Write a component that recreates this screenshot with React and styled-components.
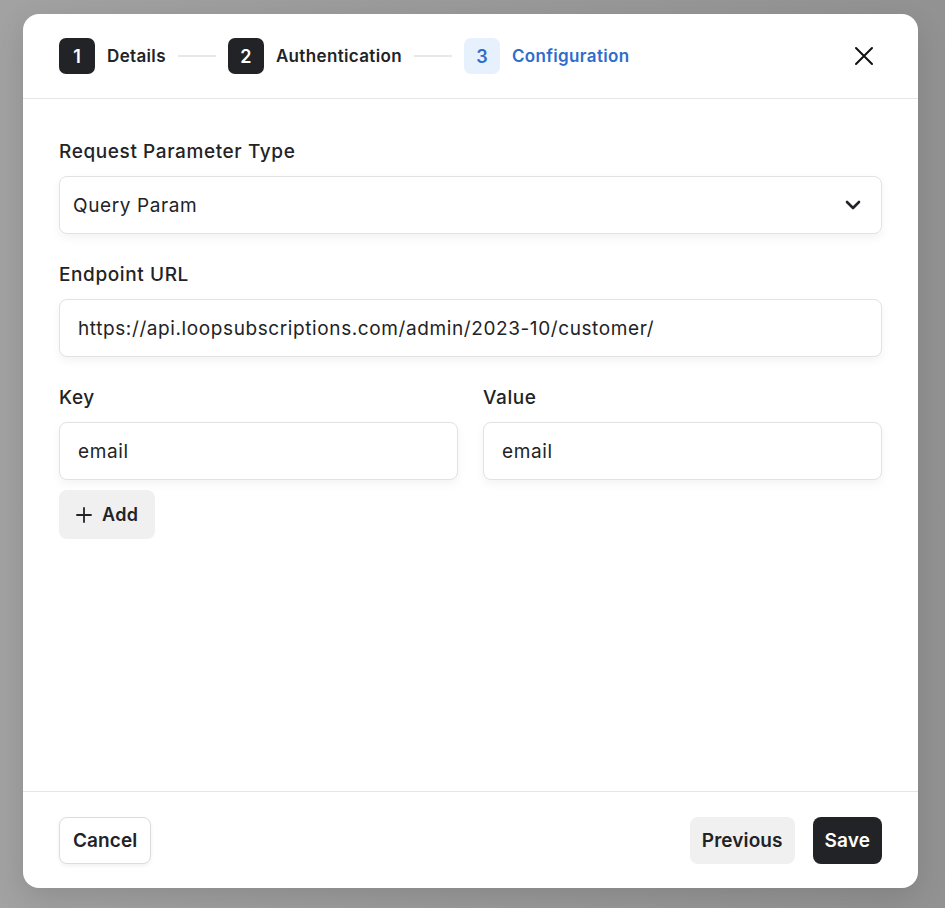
import React from "react";
import styled, { createGlobalStyle } from "styled-components";

const Global = createGlobalStyle`
  html, body { margin: 0; padding: 0; }
  body {
    font-family: Inter, "Noto Sans", "Liberation Sans", sans-serif;
    background: #9b9b9c;
    -webkit-font-smoothing: antialiased;
  }
`;

const Backdrop = styled.div`
  width: 945px;
  height: 908px;
  background: linear-gradient(90deg, #a2a2a3 0%, #9a9a9b 50%, #929293 100%);
  padding: 14px 27px 20px 23px;
  box-sizing: border-box;
`;

const Modal = styled.div`
  width: 895px;
  height: 874px;
  background: #fff;
  border-radius: 16px;
  display: flex;
  flex-direction: column;
  overflow: hidden;
  box-shadow: 0 10px 30px rgba(0, 0, 0, 0.12);
`;

const Header = styled.div`
  display: flex;
  align-items: center;
  padding: 24px 36px 24px 36px;
  border-bottom: 1px solid #e6e6e6;
  height: 36px;
`;

const Steps = styled.div`
  display: flex;
  align-items: center;
  flex: 1;
`;

const Step = styled.div`
  display: flex;
  align-items: center;
  gap: 12px;
`;

const Badge = styled.div`
  width: 36px;
  height: 36px;
  border-radius: 7px;
  display: flex;
  align-items: center;
  justify-content: center;
  font-size: 18px;
  font-weight: 600;
  background: ${(p) => (p.$active ? "#e7f0fd" : "#222326")};
  color: ${(p) => (p.$active ? "#2f6ccc" : "#ffffff")};
`;

const StepLabel = styled.span`
  font-size: 17px;
  font-weight: 600;
  color: ${(p) => (p.$active ? "#2f6ccc" : "#222326")};
  letter-spacing: 0.35px;
`;

const Connector = styled.div`
  width: 38px;
  height: 2px;
  background: #e8e8e8;
  margin: 0 12px;
`;

const CloseButton = styled.button`
  border: none;
  background: none;
  padding: 0;
  width: 24px;
  height: 24px;
  display: flex;
  align-items: center;
  justify-content: center;
  margin-right: 6px;
  cursor: pointer;
`;

const Body = styled.div`
  flex: 1;
  padding: 41px 36px 0 36px;
  display: flex;
  flex-direction: column;
`;

const Field = styled.div`
  display: flex;
  flex-direction: column;
  margin-bottom: ${(p) => p.$mb ?? 29}px;
  flex: ${(p) => (p.$grow ? 1 : "none")};
`;

const Label = styled.label`
  font-size: 19px;
  font-weight: 500;
  color: #222326;
  line-height: 24px;
  letter-spacing: 0.6px;
  margin-bottom: 12px;
`;

const Box = styled.div`
  height: 58px;
  box-sizing: border-box;
  border: 1px solid #e2e2e3;
  border-radius: 8px;
  display: flex;
  align-items: center;
  padding: 0 ${(p) => p.$pr ?? 18}px 0 ${(p) => p.$pl ?? 18}px;
  font-size: 19px;
  letter-spacing: 0.6px;
  color: #222326;
  background: #fff;
  box-shadow: 0 4px 10px rgba(0, 0, 0, 0.05);
`;

const BoxText = styled.span`
  flex: 1;
  white-space: nowrap;
`;

const Row = styled.div`
  display: flex;
  gap: 25px;
`;

const AddButton = styled.button`
  align-self: flex-start;
  height: 49px;
  padding: 0 16px 0 16px;
  border: none;
  border-radius: 8px;
  background: #f0f0f1;
  display: flex;
  align-items: center;
  gap: 9px;
  font-family: inherit;
  font-size: 18px;
  letter-spacing: 0.4px;
  font-weight: 600;
  color: #222326;
`;

const Footer = styled.div`
  border-top: 1px solid #e6e6e6;
  padding: 25px 36px 24px 36px;
  display: flex;
  align-items: center;
`;

const Spacer = styled.div`
  flex: 1;
`;

const Button = styled.button`
  height: 47px;
  padding: 0 ${(p) => p.$px ?? 11}px;
  border-radius: 8px;
  font-family: inherit;
  font-size: 19px;
  letter-spacing: 0.1px;
  font-weight: 600;
  margin-left: ${(p) => p.$ml ?? 0}px;
  border: ${(p) =>
    p.$variant === "outline" ? "1px solid #dcdcdd" : "1px solid transparent"};
  background: ${(p) =>
    p.$variant === "primary"
      ? "#222326"
      : p.$variant === "soft"
      ? "#f0f0f1"
      : "#fff"};
  color: ${(p) => (p.$variant === "primary" ? "#fff" : "#222326")};
  box-shadow: ${(p) =>
    p.$variant === "outline" ? "0 2px 4px rgba(0,0,0,0.06)" : "none"};
`;

const steps = [
  { n: 1, label: "Details" },
  { n: 2, label: "Authentication" },
  { n: 3, label: "Configuration", active: true },
];

export default function App() {
  return (
    <>
      <Global />
      <Backdrop>
        <Modal>
          <Header>
            <Steps>
              {steps.map((s, i) => (
                <React.Fragment key={s.n}>
                  {i > 0 && <Connector />}
                  <Step>
                    <Badge $active={s.active}>{s.n}</Badge>
                    <StepLabel $active={s.active}>{s.label}</StepLabel>
                  </Step>
                </React.Fragment>
              ))}
            </Steps>
            <CloseButton aria-label="Close">
              <svg width="20" height="20" viewBox="0 0 20 20" fill="none">
                <path
                  d="M2 2 L18 18 M18 2 L2 18"
                  stroke="#111"
                  strokeWidth="2"
                  strokeLinecap="round"
                />
              </svg>
            </CloseButton>
          </Header>
          <Body>
            <Field>
              <Label>Request Parameter Type</Label>
              <Box $pl={13} $pr={18}>
                <BoxText>Query Param</BoxText>
                <svg width="20" height="20" viewBox="0 0 20 20" fill="none">
                  <path
                    d="M4 7 L10 13 L16 7"
                    stroke="#222326"
                    strokeWidth="2.6"
                    strokeLinecap="round"
                    strokeLinejoin="round"
                  />
                </svg>
              </Box>
            </Field>
            <Field>
              <Label>Endpoint URL</Label>
              <Box>
                <BoxText>https://api.loopsubscriptions.com/admin/2023-10/customer/</BoxText>
              </Box>
            </Field>
            <Row>
              <Field $grow $mb={10}>
                <Label>Key</Label>
                <Box>
                  <BoxText>email</BoxText>
                </Box>
              </Field>
              <Field $grow $mb={10}>
                <Label>Value</Label>
                <Box>
                  <BoxText>email</BoxText>
                </Box>
              </Field>
            </Row>
            <AddButton>
              <svg width="18" height="18" viewBox="0 0 18 18" fill="none">
                <path
                  d="M9 2 V16 M2 9 H16"
                  stroke="#222326"
                  strokeWidth="1.8"
                  strokeLinecap="round"
                />
              </svg>
              Add
            </AddButton>
          </Body>
          <Footer>
            <Button $variant="outline" $px={13}>
              Cancel
            </Button>
            <Spacer />
            <Button $variant="soft">Previous</Button>
            <Button $variant="primary" $ml={18}>
              Save
            </Button>
          </Footer>
        </Modal>
      </Backdrop>
    </>
  );
}
